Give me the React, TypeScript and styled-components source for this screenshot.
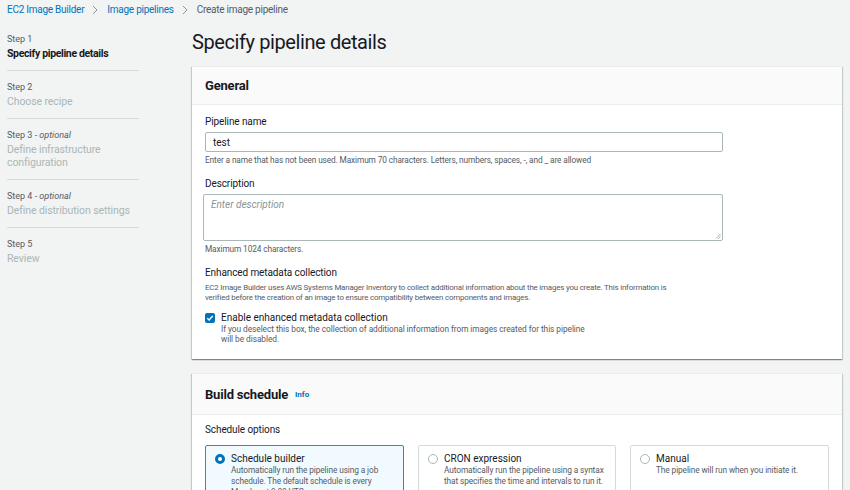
import React from "react";
import styled, { createGlobalStyle } from "styled-components";

const Global = createGlobalStyle`
  html, body { margin: 0; padding: 0; background: #f2f3f3; }
  body { font-family: Roboto, "Liberation Sans", sans-serif; color: #16191f; }
  * { box-sizing: border-box; }
`;

const Page = styled.div`
  width: 850px;
  height: 490px;
  overflow: hidden;
  background: #f2f3f3;
`;

const Breadcrumbs = styled.nav`
  display: flex;
  align-items: center;
  height: 19px;
  padding-left: 7px;
  font-size: 10px;
  letter-spacing: -0.25px;
`;

const Crumb = styled.span<{ $link?: boolean }>`
  color: ${(p) => (p.$link ? "#0073bb" : "#545b64")};
`;

const Sep = styled.span`
  display: inline-flex;
  width: 23px;
  justify-content: center;
`;

const Layout = styled.div`
  display: flex;
  padding-left: 7px;
`;

const SideNav = styled.ol`
  list-style: none;
  margin: 0;
  padding: 14px 0 0 0;
  width: 132px;
  flex: none;
`;

const StepItem = styled.li<{ $last?: boolean }>`
  padding: 0 0 ${(p) => (p.$last ? 0 : 10)}px 0;
  margin-bottom: 10px;
  border-bottom: ${(p) => (p.$last ? "none" : "1px solid #d5dbdb")};
`;

const StepLabel = styled.div`
  font-size: 9px;
  line-height: 13px;
  color: #545b64;
  em { font-style: italic; }
`;

const StepName = styled.div<{ $active?: boolean }>`
  font-size: 10.5px;
  line-height: 13px;
  margin-top: 1px;
  letter-spacing: ${(p) => (p.$active ? -0.35 : -0.1)}px;
  font-weight: ${(p) => (p.$active ? 700 : 400)};
  color: ${(p) => (p.$active ? "#16191f" : "#aab7b8")};
`;

const Main = styled.main`
  margin-left: 53px;
  width: 650px;
  flex: none;
`;

const Title = styled.h1`
  margin: 11px 0 11px 0;
  font-size: 20px;
  line-height: 25px;
  letter-spacing: -0.4px;
  font-weight: 400;
  color: #16191f;
`;

const Card = styled.section`
  background: #fff;
  border-top: 1px solid #eaeded;
  box-shadow: 0 1px 1px 0 rgba(0, 28, 36, 0.3), 1px 1px 1px 0 rgba(0, 28, 36, 0.15),
    -1px 1px 1px 0 rgba(0, 28, 36, 0.15);
  margin-bottom: 14px;
`;

const CardHeader = styled.header<{ $h: number }>`
  display: flex;
  align-items: center;
  gap: 7px;
  height: ${(p) => p.$h}px;
  padding: 0 13px;
  background: #fafafa;
  border-bottom: 1px solid #eaeded;
`;

const CardTitle = styled.h2`
  margin: 0;
  font-size: 13px;
  font-weight: 700;
  letter-spacing: -0.2px;
  color: #16191f;
`;

const InfoLink = styled.span`
  font-size: 8px;
  font-weight: 700;
  color: #0073bb;
  margin-top: 1px;
`;

const CardBody = styled.div<{ $pt?: number; $pb?: number }>`
  padding: ${(p) => p.$pt ?? 10}px 13px ${(p) => p.$pb ?? 14}px 13px;
`;

const Field = styled.div<{ $mt?: number }>`
  margin-top: ${(p) => p.$mt ?? 0}px;
`;

const Label = styled.div`
  font-size: 10px;
  line-height: 14px;
  letter-spacing: -0.1px;
  color: #16191f;
  margin-bottom: 3px;
`;

const Input = styled.div`
  width: 518px;
  height: 20px;
  border: 1px solid #aab7b8;
  border-radius: 2px;
  padding: 0 7px;
  display: flex;
  align-items: center;
  font-size: 10px;
  color: #16191f;
`;

const TextArea = styled.div`
  position: relative;
  width: 520px;
  height: 47px;
  margin-left: -2px;
  border: 1px solid #aab7b8;
  border-radius: 2px;
  padding: 4px 7px;
  font-size: 10px;
  font-style: italic;
  color: #879596;
`;

const Grip = styled.svg`
  position: absolute;
  right: 1px;
  bottom: 1px;
`;

const Hint = styled.div`
  font-size: 8.3px;
  line-height: 12px;
  letter-spacing: -0.12px;
  color: #545b64;
  margin-top: 2px;
`;

const Desc = styled.div`
  font-size: 7.9px;
  line-height: 10px;
  letter-spacing: -0.18px;
  color: #545b64;
  max-width: 468px;
`;

const CheckRow = styled.div`
  display: flex;
  gap: 6px;
  margin-top: 8px;
`;

const CheckBox = styled.span`
  width: 10px;
  height: 10px;
  margin-top: 2px;
  border-radius: 2px;
  background: #0073bb;
  display: inline-flex;
  align-items: center;
  justify-content: center;
  flex: none;
`;

const CheckText = styled.div`
  font-size: 10px;
  line-height: 13px;
`;

const CheckDesc = styled.div`
  font-size: 8.3px;
  line-height: 10px;
  letter-spacing: -0.05px;
  color: #545b64;
  max-width: 366px;
`;

const Tiles = styled.div`
  display: grid;
  grid-template-columns: 199px 198px 199px;
  gap: 14px;
  margin-top: 8px;
`;

const Tile = styled.div<{ $selected?: boolean }>`
  display: flex;
  gap: 6px;
  height: 60px;
  padding: 6px 6px 6px 9px;
  border-radius: 2px;
  border: 1px solid ${(p) => (p.$selected ? "#00a1c9" : "#d5dbdb")};
  background: ${(p) => (p.$selected ? "#f1faff" : "#fff")};
`;

const Radio = styled.span<{ $on?: boolean }>`
  width: 10px;
  height: 10px;
  border-radius: 50%;
  margin-top: 2px;
  flex: none;
  border: ${(p) => (p.$on ? "3px solid #0073bb" : "1px solid #aab7b8")};
  background: #fff;
`;

const TileTitle = styled.div`
  font-size: 10px;
  line-height: 13px;
  color: #16191f;
`;

const TileDesc = styled.div`
  font-size: 8.3px;
  line-height: 11px;
  letter-spacing: -0.1px;
  color: #545b64;
`;

const Chevron = () => (
  <svg width="7" height="10" viewBox="0 0 7 10">
    <path d="M1 1l4 4-4 4" fill="none" stroke="#879596" strokeWidth="1" />
  </svg>
);

const steps = [
  { label: "Step 1", name: "Specify pipeline details", active: true },
  { label: "Step 2", name: "Choose recipe" },
  { label: "Step 3", optional: true, name: "Define infrastructure configuration" },
  { label: "Step 4", optional: true, name: "Define distribution settings" },
  { label: "Step 5", name: "Review" },
];

const tiles = [
  {
    title: "Schedule builder",
    desc: "Automatically run the pipeline using a job schedule. The default schedule is every Monday at 9:00 UTC.",
    selected: true,
  },
  {
    title: "CRON expression",
    desc: "Automatically run the pipeline using a syntax that specifies the time and intervals to run it.",
  },
  { title: "Manual", desc: "The pipeline will run when you initiate it." },
];

export default function App() {
  return (
    <Page>
      <Global />
      <Breadcrumbs>
        <Crumb $link>EC2 Image Builder</Crumb>
        <Sep>
          <Chevron />
        </Sep>
        <Crumb $link>Image pipelines</Crumb>
        <Sep>
          <Chevron />
        </Sep>
        <Crumb>Create image pipeline</Crumb>
      </Breadcrumbs>
      <Layout>
        <SideNav>
          {steps.map((s, i) => (
            <StepItem key={s.label} $last={i === steps.length - 1}>
              <StepLabel>
                {s.label}
                {s.optional && (
                  <>
                    {" - "}
                    <em>optional</em>
                  </>
                )}
              </StepLabel>
              <StepName $active={s.active}>{s.name}</StepName>
            </StepItem>
          ))}
        </SideNav>
        <Main>
          <Title>Specify pipeline details</Title>
          <Card>
            <CardHeader $h={38}>
              <CardTitle>General</CardTitle>
            </CardHeader>
            <CardBody $pb={15}>
              <Field>
                <Label>Pipeline name</Label>
                <Input>test</Input>
                <Hint>
                  Enter a name that has not been used. Maximum 70 characters. Letters, numbers, spaces, -, and _ are
                  allowed
                </Hint>
              </Field>
              <Field $mt={11}>
                <Label>Description</Label>
                <TextArea>
                  Enter description
                  <Grip width="6" height="6" viewBox="0 0 6 6">
                    <path d="M5.5 1L1 5.5M5.5 3.5L3.5 5.5" stroke="#879596" strokeWidth="0.8" />
                  </Grip>
                </TextArea>
                <Hint>Maximum 1024 characters.</Hint>
              </Field>
              <Field $mt={11}>
                <Label>Enhanced metadata collection</Label>
                <Desc>
                  EC2 Image Builder uses AWS Systems Manager Inventory to collect additional information about the images
                  you create. This information is verified before the creation of an image to ensure compatibility
                  between components and images.
                </Desc>
                <CheckRow>
                  <CheckBox>
                    <svg width="8" height="8" viewBox="0 0 8 8">
                      <path d="M1.3 4.2l1.8 1.8 3.6-4" fill="none" stroke="#fff" strokeWidth="1.4" />
                    </svg>
                  </CheckBox>
                  <div>
                    <CheckText>Enable enhanced metadata collection</CheckText>
                    <CheckDesc>
                      If you deselect this box, the collection of additional information from images created for this
                      pipeline will be disabled.
                    </CheckDesc>
                  </div>
                </CheckRow>
              </Field>
            </CardBody>
          </Card>
          <Card>
            <CardHeader $h={41}>
              <CardTitle>Build schedule</CardTitle>
              <InfoLink>Info</InfoLink>
            </CardHeader>
            <CardBody $pt={8}>
              <Label>Schedule options</Label>
              <Tiles>
                {tiles.map((t) => (
                  <Tile key={t.title} $selected={t.selected}>
                    <Radio $on={t.selected} />
                    <div>
                      <TileTitle>{t.title}</TileTitle>
                      <TileDesc>{t.desc}</TileDesc>
                    </div>
                  </Tile>
                ))}
              </Tiles>
            </CardBody>
          </Card>
        </Main>
      </Layout>
    </Page>
  );
}
